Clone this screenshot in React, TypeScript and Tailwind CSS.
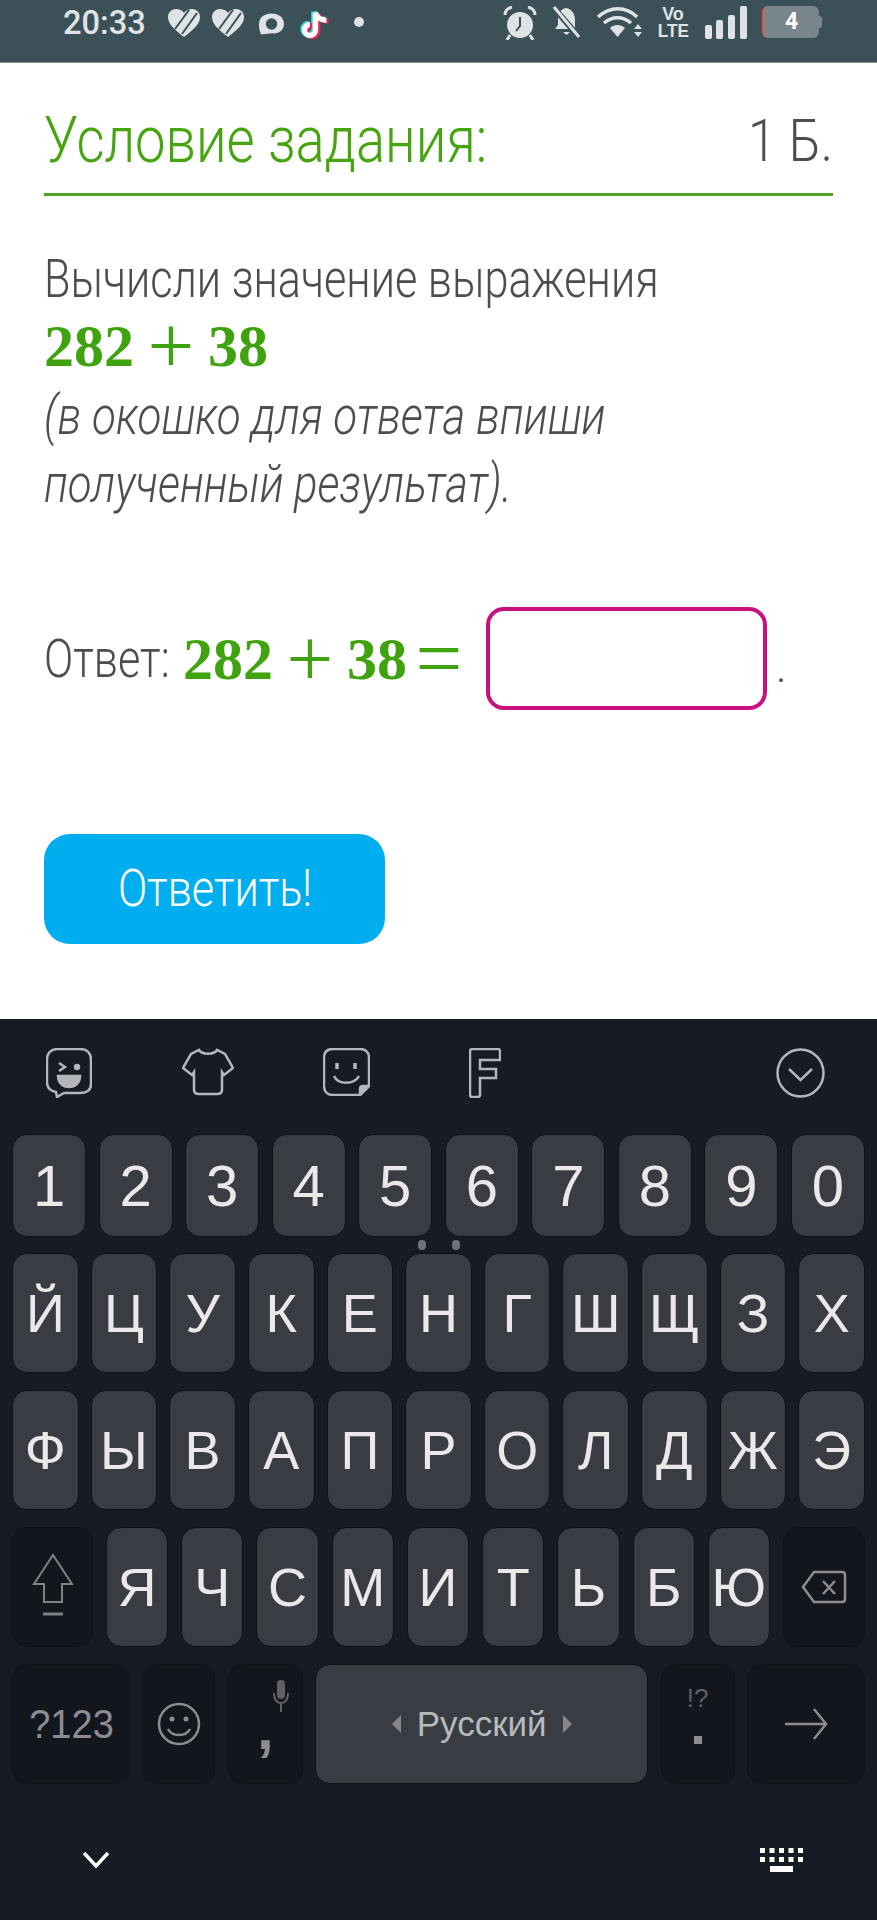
import React from 'react';

const sans = "font-['Roboto',sans-serif]";
const math = "font-['Liberation_Serif',serif] font-bold text-[#3fa30f]";

const row1 = ['1', '2', '3', '4', '5', '6', '7', '8', '9', '0'];
const row2 = ['Й', 'Ц', 'У', 'К', 'Е', 'Н', 'Г', 'Ш', 'Щ', 'З', 'Х'];
const row3 = ['Ф', 'Ы', 'В', 'А', 'П', 'Р', 'О', 'Л', 'Д', 'Ж', 'Э'];
const row4 = ['Я', 'Ч', 'С', 'М', 'И', 'Т', 'Ь', 'Б', 'Ю'];

const lightKey = 'flex items-center justify-center rounded-[15px] border border-[#0e1015] bg-[#393c43]';
const darkKey = 'relative flex items-center justify-center rounded-[15px] border border-[#0f1117] bg-[#14161e]';

const Heart = () => (
  <svg width="34" height="30" viewBox="0 0 34 30">
    <path d="M17 29 C7 21 1 16 1 9 C1 4 5 1 9 1 C12 1 15 2 17 5 C19 2 22 1 25 1 C29 1 33 4 33 9 C33 16 27 21 17 29 Z" fill="#dfe3e5" />
    <path d="M8 21 L22 2 M15 26 L30 5" stroke="#3c5058" strokeWidth="2" />
  </svg>
);

const StatusBar = () => (
  <div className="flex h-[63px] items-start border-b border-[#7d8c92] bg-[#3c5058] pl-[63px] text-[#dfe3e5]">
    <span className="mt-[1px] inline-block w-[92px] origin-left scale-x-[0.96] font-['Roboto',sans-serif] text-[34px] leading-[42px] font-medium">20:33</span>
    <div className="mt-[8px] flex w-[348px] items-start">
      <div className="ml-[12px]"><Heart /></div>
      <div className="ml-[10px]"><Heart /></div>
      <svg className="mt-[4px] ml-[13px]" width="27" height="24" viewBox="0 0 26 22">
        <path d="M13 1 C20 1 25 5 25 11 C25 17 20 21 13 20 L3 21 C1 16 1 14 1 11 C1 5 6 1 13 1 Z" fill="#dfe3e5" />
        <circle cx="13" cy="11" r="5.5" fill="#3c5058" />
      </svg>
      <svg className="mt-[-2px] ml-[15px]" width="33" height="35" viewBox="0 0 30 32">
        <path d="M14 6 V22 A5 5 0 1 1 9 17 M14 6 C15 10 19 13 24 13" fill="none" stroke="#25d5dd" strokeWidth="5" transform="translate(-1.5 -1)" />
        <path d="M14 6 V22 A5 5 0 1 1 9 17 M14 6 C15 10 19 13 24 13" fill="none" stroke="#e8285a" strokeWidth="5" transform="translate(2 1)" />
        <path d="M14 6 V22 A5 5 0 1 1 9 17 M14 6 C15 10 19 13 24 13" fill="none" stroke="#ffffff" strokeWidth="5" />
      </svg>
      <span className="mt-[9px] ml-[21px] h-[10px] w-[10px] rounded-full bg-[#dfe3e5]" />
    </div>
    <div className="mt-[6px] flex items-start">
      <svg width="34" height="34" viewBox="0 0 34 34">
        <circle cx="17" cy="19" r="13" fill="#dfe3e5" />
        <path d="M17 11 V20 L13 25" fill="none" stroke="#3c5058" strokeWidth="2" />
        <path d="M2 9 C2 4 5 2 9 1 M32 9 C32 4 29 2 25 1 M7 29 L4 34 M27 29 L30 34" fill="none" stroke="#dfe3e5" strokeWidth="3" />
      </svg>
      <svg className="ml-[14px]" width="31" height="32" viewBox="0 0 31 32">
        <path d="M15 2 C21 3 24 8 24 14 V23 H4 L7 19 V13 C7 7 10 3 15 2 Z M12 26 H19 L15.5 29 Z" fill="#dfe3e5" />
        <path d="M3 2 L28 31" stroke="#3c5058" strokeWidth="6" />
        <path d="M3 1 L28 31" stroke="#dfe3e5" strokeWidth="3" />
      </svg>
      <svg className="ml-[14px]" width="46" height="32" viewBox="0 0 46 32">
        <path d="M2 11 C14 0 30 0 41 11 M8 17 C16 10 27 10 35 17" fill="none" stroke="#dfe3e5" strokeWidth="3.5" />
        <path d="M14 22 C18 18 25 18 29 22 L21.5 31 Z" fill="#dfe3e5" />
        <path d="M42 18 L46 23 H38 Z M38 26 H46 L42 31 Z" fill="#dfe3e5" />
      </svg>
      <div className="ml-[16px] flex w-[30px] flex-col items-center font-['Liberation_Sans',sans-serif] text-[18px] leading-[17px] font-bold">
        <span>Vo</span>
        <span className="scale-x-[0.95]">LTE</span>
      </div>
      <svg className="ml-[17px]" width="42" height="34" viewBox="0 0 42 34">
        <rect x="0" y="19" width="7" height="14" rx="2" fill="#dfe3e5" />
        <rect x="11" y="14" width="7" height="19" rx="2" fill="#dfe3e5" />
        <rect x="23" y="9" width="7" height="24" rx="2" fill="#dfe3e5" />
        <rect x="35" y="0" width="7" height="33" rx="2" fill="#dfe3e5" />
      </svg>
      <div className="ml-[15px] flex h-[32px] w-[57px] items-center justify-center rounded-[6px] border-l-2 border-[#e05a50] bg-[#78868c] font-['Roboto',sans-serif] text-[23px] font-bold text-white">4</div>
      <span className="mt-[10px] h-[12px] w-[3px] rounded-r-[2px] bg-[#78868c]" />
    </div>
  </div>
);

const Plus = () => (
  <span className="inline-block w-[74px] translate-y-[7px] text-center text-[83px] leading-[0] font-normal">+</span>
);

const Task = () => (
  <div className={`h-[956px] bg-white px-[44px] pt-[43px] text-[#4d4d4d] ${sans}`}>
    <div className="flex h-[70px] items-center justify-between">
      <span className="inline-block origin-left scale-x-[0.85] whitespace-nowrap text-[64px] leading-[70px] font-light text-[#46a40e]">Условие задания:</span>
      <span className="inline-block origin-right scale-x-[0.85] whitespace-nowrap text-[60px] leading-[70px] font-light">1 Б.</span>
    </div>
    <div className="mt-[17px] h-[3px] bg-[#4fa320]" />
    <p className="mt-[49px] h-[68px] origin-left scale-x-[0.8] whitespace-nowrap text-[54px] leading-[68px] font-light">Вычисли значение выражения</p>
    <p className={`h-[66px] whitespace-nowrap text-[60px] leading-[66px] ${math}`}>282<Plus />38</p>
    <p className="mt-[3px] h-[68px] origin-left scale-x-[0.813] whitespace-nowrap text-[54px] leading-[68px] font-light italic">(в окошко для ответа впиши</p>
    <p className="h-[68px] origin-left scale-x-[0.81] whitespace-nowrap text-[54px] leading-[68px] font-light italic">полученный результат).</p>
    <div className="mt-[89px] flex h-[103px] items-center">
      <span className="inline-block w-[139px] origin-left scale-x-[0.8] text-[54px] font-light">Ответ:</span>
      <span className={`w-[303px] whitespace-nowrap text-[60px] leading-[66px] ${math}`}>
        282<Plus />38<span className="inline-block w-[64px] translate-y-[7px] text-center text-[83px] leading-[0] font-normal">=</span>
      </span>
      <input aria-label="Ответ" className="h-[103px] w-[281px] rounded-[18px] border-[4px] border-[#c9107f] bg-white outline-none" />
      <span className="mt-[16px] ml-[9px] text-[44px] font-light">.</span>
    </div>
    <button className="mt-[124px] flex h-[110px] w-[341px] items-center justify-center rounded-[26px] bg-[#00aeef]">
      <span className="inline-block scale-x-[0.83] text-[52px] font-light text-white">Ответить!</span>
    </button>
  </div>
);

const Toolbar = () => (
  <div className="flex h-[115px] items-start pt-[29px] pr-[52px] pl-[46px]">
    <svg width="46" height="50" viewBox="0 0 46 50" fill="none" stroke="#b4b6bb" strokeWidth="2.5">
      <path d="M12 1 H34 C41 1 45 5 45 12 V36 C45 42 41 45 34 45 H18 L11 49 L10 44 C4 43 1 40 1 34 V12 C1 5 5 1 12 1 Z" />
      <path d="M13 15 L19 19 L13 23" />
      <circle cx="31" cy="19" r="2" fill="#b4b6bb" />
      <path d="M12 28 H34 C34 35 29 39 23 39 C17 39 12 35 12 28 Z" fill="#b4b6bb" />
    </svg>
    <svg className="ml-[90px]" width="52" height="48" viewBox="0 0 52 48" fill="none" stroke="#b4b6bb" strokeWidth="2.5">
      <path d="M17 2 C20 7 32 7 35 2 L43 6 L51 20 L42 27 L40 24 V42 C40 45 38 46 35 46 H17 C14 46 12 45 12 42 V24 L10 27 L1 20 L9 6 Z" />
    </svg>
    <svg className="ml-[89px]" width="47" height="48" viewBox="0 0 47 48" fill="none" stroke="#b4b6bb" strokeWidth="2.5">
      <path d="M10 1 H37 C42 1 46 4 46 10 V38 L37 47 H10 C4 47 1 43 1 38 V10 C1 4 4 1 10 1 Z" />
      <path d="M46 38 H40 C38 38 37 39 37 41 V47 Z" fill="#b4b6bb" />
      <path d="M14 15 V21 M32 15 V21" strokeWidth="3.5" />
      <path d="M11 28 C15 37 31 37 36 28" />
    </svg>
    <svg className="ml-[99px]" width="32" height="50" viewBox="0 0 32 50" fill="none" stroke="#b4b6bb" strokeWidth="2.5">
      <path d="M3 1 H29 C30 1 31 2 31 3 V12 H11 V21 H27 V30 H11 V47 C11 48 10 49 9 49 H3 C2 49 1 48 1 47 V3 C1 2 2 1 3 1 Z" />
    </svg>
    <svg className="ml-auto" width="49" height="50" viewBox="0 0 49 50" fill="none" stroke="#b4b6bb" strokeWidth="2.5">
      <ellipse cx="24.5" cy="25" rx="23" ry="23.5" />
      <path d="M13 21 L24.5 32 L36 21" />
    </svg>
  </div>
);

const Hint = ({ className, children }: { className: string; children: React.ReactNode }) => (
  <span className={`absolute ${className}`}>{children}</span>
);

const Keyboard = () => (
  <div className="h-[901px] bg-[#171b24] font-['Liberation_Sans',sans-serif] text-[#e9e9ea]">
    <Toolbar />
    <div className="grid h-[103px] grid-cols-10 gap-x-[12.5px] px-[12px]">
      {row1.map((k) => (
        <div key={k} className={`${lightKey} text-[58px]`}>{k}</div>
      ))}
    </div>
    <div className="flex h-[16px] items-center pl-[418px]">
      <span className="h-[10px] w-[8px] rounded-full bg-[#70737a]" />
      <span className="ml-[26px] h-[10px] w-[8px] rounded-full bg-[#70737a]" />
    </div>
    <div className="grid h-[120px] grid-cols-11 gap-x-[12px] px-[12px]">
      {row2.map((k) => (
        <div key={k} className={`${lightKey} text-[54px]`}>{k}</div>
      ))}
    </div>
    <div className="mt-[17px] grid h-[120px] grid-cols-11 gap-x-[12px] px-[12px]">
      {row3.map((k) => (
        <div key={k} className={`${lightKey} text-[54px]`}>{k}</div>
      ))}
    </div>
    <div className="mt-[17px] flex h-[120px] gap-x-[13px] px-[12px]">
      <div className={`${darkKey} w-[81px] shrink-0`}>
        <svg width="42" height="70" viewBox="0 0 42 70" fill="none" stroke="#7f8187" strokeWidth="2">
          <path d="M21 3 L40 32 H30 V50 H12 V32 H2 Z" />
          <path d="M11 62 H31" strokeWidth="3" />
        </svg>
      </div>
      <div className="grid flex-1 grid-cols-9 gap-x-[13px]">
        {row4.map((k) => (
          <div key={k} className={`${lightKey} text-[54px]`}>{k}</div>
        ))}
      </div>
      <div className={`${darkKey} w-[82px] shrink-0`}>
        <svg width="46" height="34" viewBox="0 0 46 34" fill="none" stroke="#8b8d93" strokeWidth="2.5">
          <path d="M13 2 H41 C43 2 44 3 44 5 V29 C44 31 43 32 41 32 H13 L2 17 Z" />
          <path d="M22 11 L34 24 M34 11 L22 24" />
        </svg>
      </div>
    </div>
    <div className="mt-[17px] flex h-[120px] gap-x-[12.4px] px-[12px] text-[#8b8d93]">
      <div className={`${darkKey} w-[118px] shrink-0 text-[40px]`}>
        <span className="inline-block scale-x-[0.95]">?123</span>
      </div>
      <div className={`${darkKey} w-[73px] shrink-0`}>
        <svg width="44" height="44" viewBox="0 0 44 44" fill="none" stroke="#8b8d93" strokeWidth="2.5">
          <circle cx="22" cy="22" r="20" />
          <circle cx="15" cy="17" r="2.5" fill="#8b8d93" stroke="none" />
          <circle cx="29" cy="17" r="2.5" fill="#8b8d93" stroke="none" />
          <path d="M11 27 C15 35 29 35 33 27" />
        </svg>
      </div>
      <div className={`${darkKey} w-[75px] shrink-0 text-[60px] font-bold`}>
        <Hint className="top-[14px] right-[12px]">
          <svg width="18" height="34" viewBox="0 0 18 34" fill="#5f6167">
            <rect x="5" y="1" width="8" height="19" rx="4" />
            <path d="M1 14 C1 21 4 25 9 25 C14 25 17 21 17 14 H15 C15 19 13 23 9 23 C5 23 3 19 3 14 Z M8 25 H10 V33 H8 Z" />
          </svg>
        </Hint>
        <span className="mt-[10px] leading-none">,</span>
      </div>
      <div className={`${lightKey} w-[333px] shrink-0 gap-[16px] text-[35px] text-[#b8babd]`}>
        <span className="h-0 w-0 border-y-[9px] border-r-[9px] border-y-transparent border-r-[#85878d]" />
        <span className="inline-block w-[130px] text-center whitespace-nowrap">Русский</span>
        <span className="h-0 w-0 border-y-[9px] border-l-[9px] border-y-transparent border-l-[#85878d]" />
      </div>
      <div className={`${darkKey} w-[74px] shrink-0 text-[44px]`}>
        <Hint className="top-[14px] text-[26px] text-[#5f6167]">!?</Hint>
        <span className="mt-[32px] h-[8px] w-[8px] bg-[#8b8d93]" />
      </div>
      <div className={`${darkKey} w-[118px] shrink-0`}>
        <svg width="44" height="32" viewBox="0 0 44 32" fill="none" stroke="#8b8d93" strokeWidth="2.5">
          <path d="M1 16 H42 M30 1 L42 16 L30 31" />
        </svg>
      </div>
    </div>
    <div className="flex items-start justify-between pt-[64px] pr-[74px] pl-[82px]">
      <svg className="mt-[3px]" width="28" height="18" viewBox="0 0 28 18" fill="none" stroke="#ffffff" strokeWidth="3.5">
        <path d="M2 2 L14 15 L26 2" />
      </svg>
      <svg width="43" height="24" viewBox="0 0 43 24" fill="#ffffff">
        <rect x="0" y="0" width="5" height="5" /><rect x="9.5" y="0" width="5" height="5" /><rect x="19" y="0" width="5" height="5" /><rect x="28.5" y="0" width="5" height="5" /><rect x="38" y="0" width="5" height="5" />
        <rect x="0" y="9" width="5" height="5" /><rect x="9.5" y="9" width="5" height="5" /><rect x="19" y="9" width="5" height="5" /><rect x="28.5" y="9" width="5" height="5" /><rect x="38" y="9" width="5" height="5" />
        <rect x="10" y="18" width="23" height="6" />
      </svg>
    </div>
  </div>
);

export default function App() {
  return (
    <div className="h-[1920px] w-[877px] overflow-hidden">
      <StatusBar />
      <Task />
      <Keyboard />
    </div>
  );
}
